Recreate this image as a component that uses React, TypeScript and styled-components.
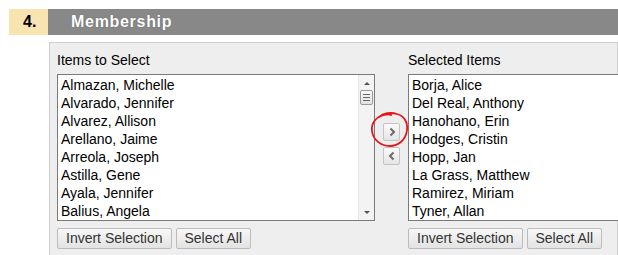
import React from "react";
import styled, { createGlobalStyle } from "styled-components";

const GlobalStyle = createGlobalStyle`
  html, body {
    margin: 0;
    padding: 0;
    overflow: hidden;
    background: #ffffff;
    font-family: "Liberation Sans", Arial, sans-serif;
  }
`;

const Page = styled.div`
  padding: 9px 0 0 9px;
`;

const Header = styled.div`
  display: flex;
  height: 26px;
`;

const StepNumber = styled.div`
  width: 39px;
  box-sizing: border-box;
  padding-left: 14px;
  background: #f8e4b0;
  color: #000;
  font-weight: bold;
  font-size: 16px;
  line-height: 26px;
`;

const StepTitle = styled.div`
  flex: 1;
  padding-left: 23px;
  background: #888888;
  color: #fff;
  font-weight: bold;
  font-size: 16px;
  letter-spacing: 0.7px;
  line-height: 26px;
  text-shadow: 0 0 1px rgba(60, 60, 60, 0.6);
`;

const Panel = styled.div`
  position: relative;
  display: flex;
  width: 569px;
  height: 214px;
  box-sizing: border-box;
  margin: 7px 0 0 40px;
  padding: 8px 0 0 7px;
  border: 1px solid #cfcfcf;
  border-bottom: none;
  background: #eeeeee;
`;

const Column = styled.div`
  flex: none;
  width: 318px;
  display: flex;
  flex-direction: column;
`;

const Label = styled.div`
  font-size: 14px;
  line-height: 18px;
  color: #000;
  margin-bottom: 5px;
`;

const ListBox = styled.div`
  display: flex;
  height: 147px;
  box-sizing: border-box;
  border: 1px solid #7a7a7a;
  background: #fff;
  overflow: hidden;
`;

const Options = styled.div`
  flex: 1;
  padding: 1px 0 0 3px;
`;

const Option = styled.div`
  font-size: 14px;
  line-height: 18px;
  color: #000;
  white-space: nowrap;
`;

const ScrollTrack = styled.div`
  flex: none;
  width: 15px;
  display: flex;
  flex-direction: column;
  align-items: center;
  background: #f3f3f3;
  border-left: 1px solid #e6e6e6;
`;

const ScrollArrow = styled.div<{ $down?: boolean }>`
  width: 0;
  height: 0;
  margin-top: ${(p) => (p.$down ? "auto" : "7px")};
  margin-bottom: ${(p) => (p.$down ? "6px" : "0")};
  border-left: 3px solid transparent;
  border-right: 3px solid transparent;
  ${(p) =>
    p.$down
      ? "border-top: 3px solid #555;"
      : "border-bottom: 3px solid #555;"}
`;

const ScrollThumb = styled.div`
  margin-top: 5px;
  width: 13px;
  height: 15px;
  box-sizing: border-box;
  border: 1px solid #9a9a9a;
  border-radius: 2px;
  background: linear-gradient(#fafafa, #e2e2e2);
  display: flex;
  flex-direction: column;
  justify-content: center;
  align-items: center;
  gap: 2px;
`;

const Grip = styled.div`
  width: 7px;
  height: 1px;
  background: #666;
`;

const ButtonRow = styled.div`
  display: flex;
  gap: 4px;
  margin-top: 7px;
`;

const Button = styled.button`
  height: 21px;
  box-sizing: border-box;
  padding: 0 8px;
  border: 1px solid #bcbcbc;
  border-radius: 2px;
  background: linear-gradient(#f7f7f7, #e3e3e3);
  font-family: "Liberation Sans", Arial, sans-serif;
  font-size: 14px;
  line-height: 19px;
  color: #333;
  white-space: nowrap;
`;

const MoveColumn = styled.div`
  position: relative;
  flex: none;
  width: 33px;
  display: flex;
  flex-direction: column;
  align-items: center;
  gap: 6px;
  padding-top: 72px;
`;

const ArrowButton = styled.div`
  width: 17px;
  height: 18px;
  box-sizing: border-box;
  border: 1px solid #c4c4c4;
  border-radius: 2px;
  background: linear-gradient(#fbfbfb, #e4e4e4);
  display: flex;
  align-items: center;
  justify-content: center;
`;

const Annotation = styled.svg`
  position: absolute;
  left: -5px;
  top: 60px;
  pointer-events: none;
`;

const available = [
  "Almazan, Michelle",
  "Alvarado, Jennifer",
  "Alvarez, Allison",
  "Arellano, Jaime",
  "Arreola, Joseph",
  "Astilla, Gene",
  "Ayala, Jennifer",
  "Balius, Angela",
];

const selected = [
  "Borja, Alice",
  "Del Real, Anthony",
  "Hanohano, Erin",
  "Hodges, Cristin",
  "Hopp, Jan",
  "La Grass, Matthew",
  "Ramirez, Miriam",
  "Tyner, Allan",
];

const Chevron = ({ dir }: { dir: "left" | "right" }) => (
  <svg width="8" height="10" viewBox="0 0 8 10">
    <path
      d={dir === "right" ? "M2.5 1.5 L6 5 L2.5 8.5" : "M5.5 1.5 L2 5 L5.5 8.5"}
      fill="none"
      stroke="#6b6b6b"
      strokeWidth="2"
    />
  </svg>
);

export default function App() {
  return (
    <>
      <GlobalStyle />
      <Page>
        <Header>
          <StepNumber>4.</StepNumber>
          <StepTitle>Membership</StepTitle>
        </Header>
        <Panel>
          <Column>
            <Label>Items to Select</Label>
            <ListBox>
              <Options>
                {available.map((n) => (
                  <Option key={n}>{n}</Option>
                ))}
              </Options>
              <ScrollTrack>
                <ScrollArrow />
                <ScrollThumb>
                  <Grip />
                  <Grip />
                  <Grip />
                </ScrollThumb>
                <ScrollArrow $down />
              </ScrollTrack>
            </ListBox>
            <ButtonRow>
              <Button>Invert Selection</Button>
              <Button>Select All</Button>
            </ButtonRow>
          </Column>
          <MoveColumn>
            <ArrowButton>
              <Chevron dir="right" />
            </ArrowButton>
            <ArrowButton>
              <Chevron dir="left" />
            </ArrowButton>
            <Annotation width="42" height="40" viewBox="0 0 42 40">
              <path
                d="M9 6 C13 2, 21 1, 27 3 C34 5, 38 11, 37 19 C36 29, 28 35, 20 35 C11 35, 3 29, 2 20 C1 12, 6 6, 14 4 C18 3, 20 3, 21 4"
                fill="none"
                stroke="#e8141c"
                strokeWidth="1.8"
                strokeLinecap="round"
              />
            </Annotation>
          </MoveColumn>
          <Column>
            <Label>Selected Items</Label>
            <ListBox>
              <Options>
                {selected.map((n) => (
                  <Option key={n}>{n}</Option>
                ))}
              </Options>
            </ListBox>
            <ButtonRow>
              <Button>Invert Selection</Button>
              <Button>Select All</Button>
            </ButtonRow>
          </Column>
        </Panel>
      </Page>
    </>
  );
}
